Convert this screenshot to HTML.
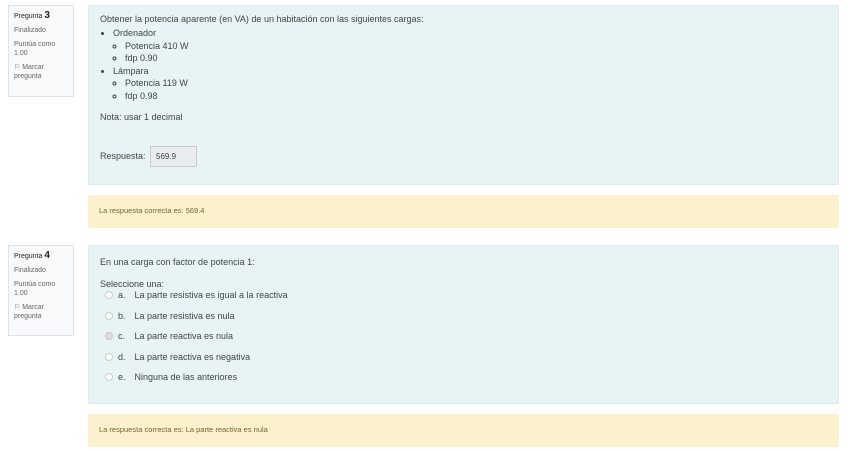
<!DOCTYPE html>
<html><head><style>
body{margin:0;width:848px;height:453px;background:#fff;font-family:"Liberation Sans",sans-serif;color:#444;position:relative;overflow:hidden}
.info{position:absolute;left:8px;width:66px;background:#f8f9fa;border:1px solid #dee2e6;font-size:7px;color:#666;padding:5px 5px;box-sizing:border-box;line-height:9px}
.info b{font-size:10px;color:#222}
.info .n{color:#222}
.info p{margin:0 0 5px}
.q{position:absolute;left:88px;width:751px;background:#e7f3f5;border:1px solid #d8ecef;border-radius:2px;box-sizing:border-box;font-size:9px;color:#444;padding:8px 11px}
.fb{position:absolute;left:88px;width:751px;background:#fcf1cd;border-radius:2px;font-size:7.5px;color:#7a6330;padding:0 11px;box-sizing:border-box}
ul{margin:0;padding-left:13px;line-height:12.5px}
ul ul{list-style:circle;padding-left:12px}
.ans{display:inline-block;background:#e9ecef;border:1px solid #ccc;padding:5px 20px 5px 5px;margin-left:2px;font-size:8px}
.opt{line-height:20.5px;padding-left:5px}
.r{display:inline-block;width:6px;height:6px;border:1px solid #ccc;border-radius:50%;margin-right:5px;vertical-align:-1px;background:#fff}
.l{display:inline-block;width:14px}
</style></head><body>
<div class="info" style="top:5px;height:92px"><p class="n">Pregunta <b>3</b></p><p>Finalizado</p><p>Puntúa como 1.00</p><p>⚐ Marcar pregunta</p></div>
<div class="q" style="top:5px;height:180px">
<div style="margin-bottom:3px">Obtener la potencia aparente (en VA) de un habitación con las siguientes cargas:</div>
<ul><li>Ordenador<ul><li>Potencia 410 W</li><li>fdp 0.90</li></ul></li><li>Lámpara<ul><li>Potencia 119 W</li><li>fdp 0.98</li></ul></li></ul>
<div style="margin-top:10px">Nota: usar 1 decimal</div>
<div style="margin-top:24px">Respuesta: <span class="ans">569.9</span></div>
</div>
<div class="fb" style="top:195px;height:33px;line-height:31px">La respuesta correcta es: 569.4</div>
<div class="info" style="top:245px;height:91px"><p class="n">Pregunta <b>4</b></p><p>Finalizado</p><p>Puntúa como 1.00</p><p>⚐ Marcar pregunta</p></div>
<div class="q" style="top:245px;height:159px">
<div style="margin-top:3px">En una carga con factor de potencia 1:</div>
<div style="margin-top:12px">Seleccione una:</div>
<div class="opt" style="margin-top:-4px"><span class="r"></span><span class="l">a.</span> La parte resistiva es igual a la reactiva</div>
<div class="opt"><span class="r"></span><span class="l">b.</span> La parte resistiva es nula</div>
<div class="opt"><span class="r" style="background:#ddd"></span><span class="l">c.</span> La parte reactiva es nula</div>
<div class="opt"><span class="r"></span><span class="l">d.</span> La parte reactiva es negativa</div>
<div class="opt"><span class="r"></span><span class="l">e.</span> Ninguna de las anteriores</div>
</div>
<div class="fb" style="top:414px;height:33px;line-height:32px">La respuesta correcta es: La parte reactiva es nula</div>
</body></html>
